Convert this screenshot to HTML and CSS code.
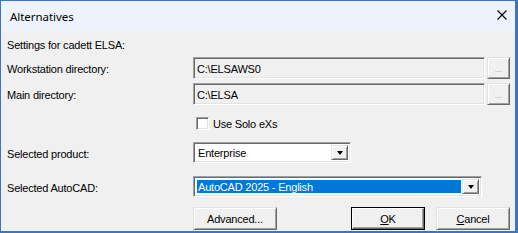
FILE: index.html
```html
<!DOCTYPE html>
<html>
<head>
<meta charset="utf-8">
<link rel="stylesheet" href="styles.css">
</head>
<body>
<div class="window">
  <div class="titlebar">
    <span class="title">Alternatives</span>
    <svg class="close" width="10" height="10" viewBox="0 0 10 10"><path d="M0.5 0.5 L9.5 9.5 M9.5 0.5 L0.5 9.5" stroke="#000" stroke-width="1.1" fill="none"/></svg>
  </div>
  <div class="content">
    <div class="row row-heading"><span class="label">Settings for cadett ELSA:</span></div>
    <div class="row row-path first-path">
      <span class="label lbl">Workstation directory:</span>
      <div class="field path">C:\ELSAWS0</div>
      <div class="raised browse"><span>...</span></div>
    </div>
    <div class="row row-path second-path">
      <span class="label lbl">Main directory:</span>
      <div class="field path">C:\ELSA</div>
      <div class="raised browse"><span>...</span></div>
    </div>
    <div class="row row-check">
      <span class="label spacer"></span>
      <span class="checkbox"></span>
      <span class="check-text">Use Solo eXs</span>
    </div>
    <div class="row row-product">
      <span class="label lbl low">Selected product:</span>
      <div class="field combo combo-product">
        <span class="combo-value">Enterprise</span>
        <span class="raised dropbtn"><i class="arrow"></i></span>
      </div>
    </div>
    <div class="row row-autocad">
      <span class="label lbl low">Selected AutoCAD:</span>
      <div class="field combo combo-autocad">
        <span class="combo-value selected">AutoCAD 2025 - English</span>
        <span class="raised dropbtn"><i class="arrow"></i></span>
      </div>
    </div>
    <div class="row row-buttons">
      <span class="label spacer"></span>
      <div class="raised button advanced">Advanced...</div>
      <div class="grow"></div>
      <div class="default-frame"><div class="raised button ok"><u>O</u>K</div></div>
      <div class="raised button cancel"><u>C</u>ancel</div>
    </div>
  </div>
</div>
</body>
</html>
```
FILE: styles.css
```css
* { box-sizing: border-box; }
html, body { margin: 0; padding: 0; }
body {
  width: 518px;
  height: 233px;
  overflow: hidden;
  background: #f0f0f0;
  font-family: "Liberation Sans", Arial, sans-serif;
  font-size: 11px;
  letter-spacing: -0.2px;
  color: #000;
}
.window {
  width: 518px;
  height: 233px;
  border-style: solid;
  border-color: #3d74c6;
  border-width: 1px 3px 2px 1px;
  background: #f0f0f0;
  display: flex;
  flex-direction: column;
}
.titlebar {
  height: 30px;
  flex: none;
  background: #eef3fb;
  display: flex;
  align-items: center;
  justify-content: space-between;
  padding: 0 8px 0 9px;
}
.title {
  font-family: "Noto Sans", "Open Sans", sans-serif;
  font-size: 11.5px;
  color: #000;
  letter-spacing: -0.05px;
}
.close { display: block; margin-bottom: 2px; }
.content {
  flex: 1;
  display: flex;
  flex-direction: column;
  padding: 6px 5px 0 6px;
}
.row { display: flex; align-items: center; flex: none; }
.label { width: 186px; flex: none; white-space: nowrap; }
.lbl { padding-top: 2px; }
.low { padding-top: 3px; }
.row-heading { height: 16px; }
.row-path { height: 22px; }
.first-path { margin-top: 4px; }
.second-path { margin-top: 4px; }
.row-check { height: 13px; margin-top: 12px; }
.row-product { height: 21px; margin-top: 12px; }
.row-autocad { height: 21px; margin-top: 13px; }
.row-buttons { height: 23px; margin-top: 10px; }

.field {
  border: 1px solid;
  border-color: #a0a0a0 #ffffff #ffffff #a0a0a0;
  box-shadow: inset 1px 1px 0 #696969, inset -1px -1px 0 #e3e3e3;
  height: 100%;
}
.path {
  width: 292px;
  padding: 1px 0 0 3px;
  display: flex;
  align-items: center;
  background: #f0f0f0;
}
.raised {
  border: 1px solid;
  border-color: #e3e3e3 #696969 #696969 #e3e3e3;
  box-shadow: inset 1px 1px 0 #ffffff, inset -1px -1px 0 #a0a0a0;
  background: #f0f0f0;
}
.browse {
  width: 23px;
  height: 100%;
  margin-left: 2px;
  display: flex;
  justify-content: center;
  align-items: flex-end;
  color: #a8a8a8;
  font-size: 9px;
  letter-spacing: 0;
  padding-bottom: 5px;
  line-height: 8px;
}
.checkbox {
  width: 13px;
  height: 13px;
  margin-left: 3px;
  background: #fff;
  border: 1px solid;
  border-color: #a0a0a0 #ffffff #ffffff #a0a0a0;
  box-shadow: inset 1px 1px 0 #696969, inset -1px -1px 0 #e3e3e3;
}
.check-text { margin-left: 4px; }
.combo {
  background: #fff;
  display: flex;
  align-items: stretch;
  padding: 2px;
}
.combo-product { width: 158px; }
.combo-autocad { width: 289px; }
.combo-value {
  flex: 1;
  display: flex;
  align-items: center;
  padding: 1px 0 0 2px;
  white-space: nowrap;
}
.combo-autocad .combo-value { margin: 1px; padding-left: 1px; }
.selected { background: #0078d7; color: #fff; }
.dropbtn {
  width: 17px;
  flex: none;
  display: flex;
  align-items: center;
  justify-content: center;
}
.arrow {
  width: 0;
  height: 0;
  border-left: 3.5px solid transparent;
  border-right: 3.5px solid transparent;
  border-top: 4px solid #000;
  margin-top: 1px;
}
.button {
  height: 23px;
  display: flex;
  align-items: center;
  justify-content: center;
  padding-top: 1px;
}
.advanced { width: 84px; }
.grow { flex: 1; }
.default-frame {
  border: 1px solid #000;
  width: 74px;
  height: 23px;
  display: flex;
}
.ok {
  width: 100%;
  height: 100%;
  border-color: #ffffff #696969 #696969 #ffffff;
  box-shadow: inset -1px -1px 0 #a0a0a0;
}
.cancel { width: 74px; margin-left: 11px; }
u { text-decoration: underline; text-underline-offset: 1px; }
```
